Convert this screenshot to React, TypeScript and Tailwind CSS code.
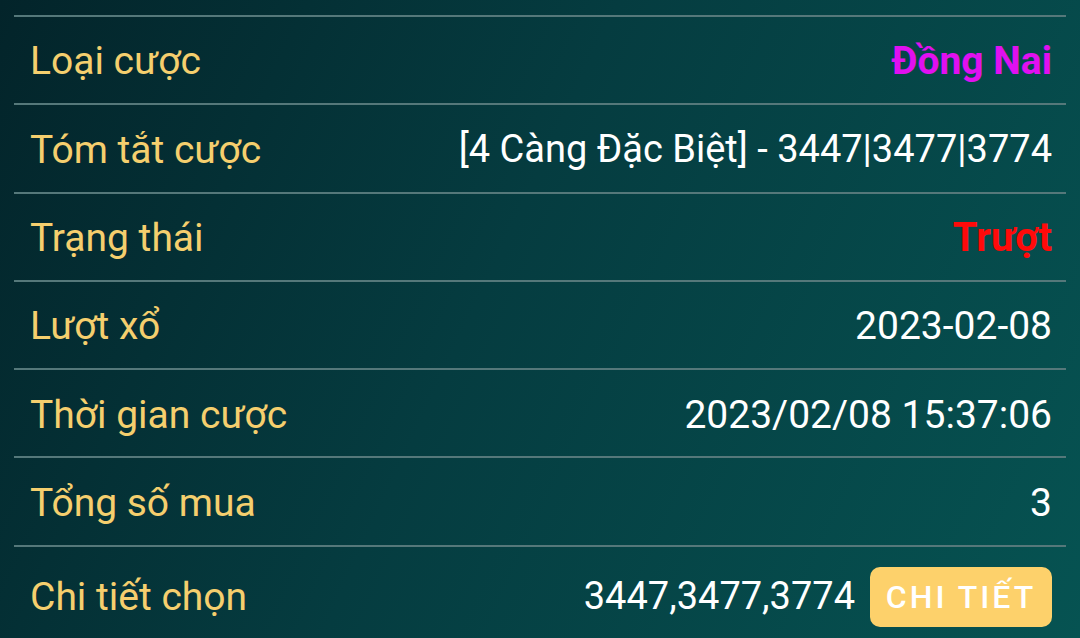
import React from "react"

const rows: { label: string; value: string; tone?: string }[] = [
  { label: "Loại cược", value: "Đồng Nai", tone: "text-[#e010f0] font-bold text-[39px]" },
  { label: "Tóm tắt cược", value: "[4 Càng Đặc Biệt] - 3447|3477|3774", tone: "text-white text-[38px]" },
  { label: "Trạng thái", value: "Trượt", tone: "text-[#ff0a0a] font-bold text-[40px]" },
  { label: "Lượt xổ", value: "2023-02-08" },
  { label: "Thời gian cược", value: "2023/02/08 15:37:06" },
  { label: "Tổng số mua", value: "3" },
]

export default function App() {
  return (
    <div
      className="w-[1080px] h-[638px] overflow-hidden bg-[linear-gradient(115deg,#03242a_0%,#053c40_45%,#065352_100%)] pt-[15px] px-[14px] text-[39px]"
      style={{ fontFamily: "Roboto, 'Noto Sans', sans-serif" }}
    >
      {rows.map((r) => (
        <div
          key={r.label}
          className="flex h-[88.3px] items-center justify-between border-t-2 border-[#55787a] pl-4 pr-[14px] pt-[3px]"
        >
          <span className="text-[#f5cf6e]">{r.label}</span>
          <span className={r.tone ?? "text-white"}>{r.value}</span>
        </div>
      ))}
      <div className="flex h-[88.3px] items-center justify-between border-t-2 border-[#55787a] pl-4 pr-[14px] pt-[14px]">
        <span className="text-[#f5cf6e]">Chi tiết chọn</span>
        <div className="flex items-center gap-[15px]">
          <span className="text-[38px] text-white">3447,3477,3774</span>
          <button className="h-[60px] w-[182px] rounded-[10px] bg-[#fdd16b] text-[32px] font-medium tracking-[3px] text-white">
            CHI TIẾT
          </button>
        </div>
      </div>
    </div>
  )
}
